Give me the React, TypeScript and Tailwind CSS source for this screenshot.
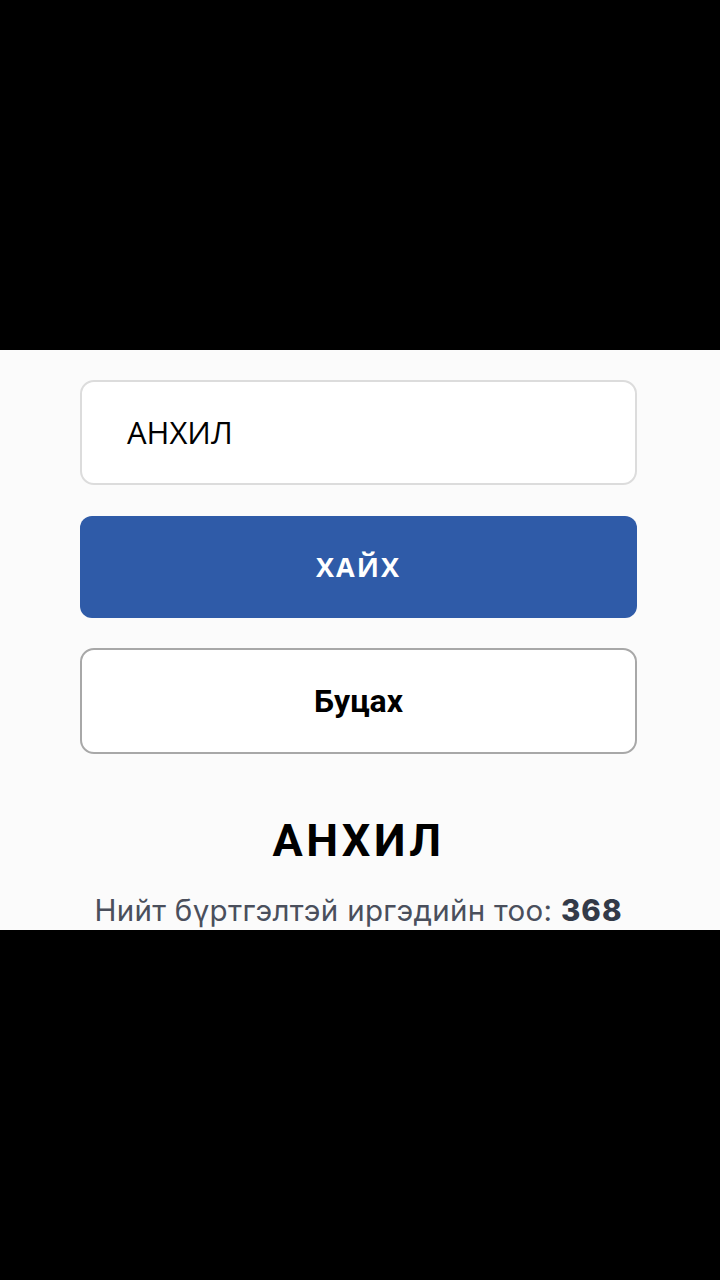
import React from "react";

export default function App() {
  return (
    <div className="w-[720px] h-[1280px] bg-black flex flex-col">
      <div className="h-[350px] shrink-0" />
      <div className="h-[580px] shrink-0 bg-[#fbfbfb] overflow-hidden flex flex-col pl-[80px] pr-[83px] pt-[30px]">
        <div className="h-[106px] rounded-[14px] border-2 border-[#dcdcdc] bg-white flex items-center pl-[45px] text-[31px] text-black font-['Open_Sans',sans-serif]">
          АНХИЛ
        </div>
        <div className="mt-[31px] h-[103px] rounded-[12px] bg-[#2f5ba8] flex items-center justify-center text-white text-[27px] font-bold tracking-[2px] font-['Open_Sans',sans-serif]">
          ХАЙХ
        </div>
        <div className="mt-[30px] h-[107px] rounded-[14px] border-2 border-[#a8a8a8] bg-white flex items-center justify-center text-black text-[32px] font-bold font-['Roboto',sans-serif]">
          Буцах
        </div>
        <div className="mt-[60px] text-center text-black text-[45px] leading-[54px] font-bold tracking-[3.5px] font-['Roboto',sans-serif]">
          АНХИЛ
        </div>
        <div className="mt-[22px] text-center text-[#4a4f5c] text-[29.5px] leading-[40px] tracking-[0.3px] font-['Inter',sans-serif]">
          Нийт бүртгэлтэй иргэдийн тоо: <span className="font-extrabold text-[#333a48] tracking-[1px]">368</span>
        </div>
      </div>
      <div className="flex-1" />
    </div>
  );
}
